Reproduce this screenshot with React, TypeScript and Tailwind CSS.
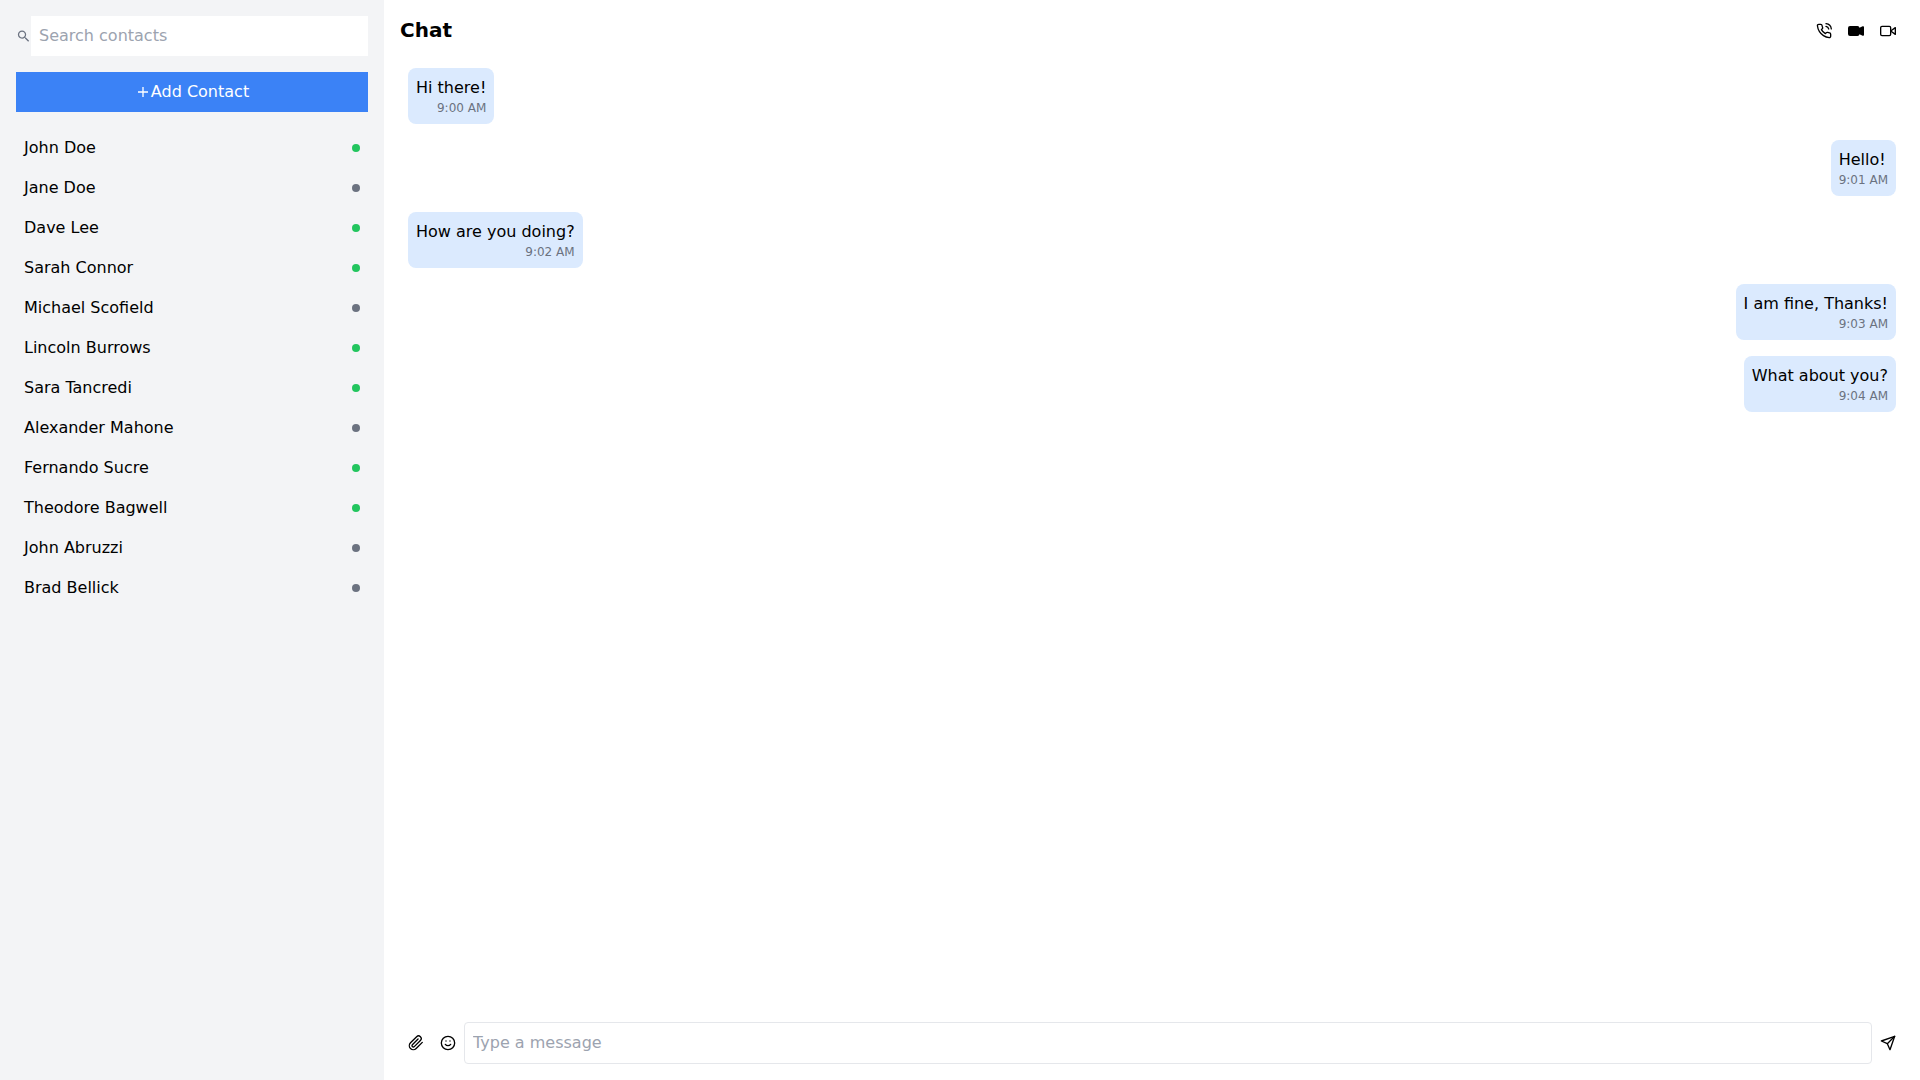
import React from 'react';
import { BsCameraVideoFill } from 'react-icons/bs';
import { FiPaperclip, FiPhoneCall, FiSend, FiSmile, FiVideo } from 'react-icons/fi';
import { IoMdAdd, IoMdSearch } from 'react-icons/io';

interface Contact {
  name: string;
  online: boolean;
}

interface Message {
  text: string;
  time: string;
  mine: boolean;
}

const contacts: Contact[] = [
  { name: 'John Doe', online: true },
  { name: 'Jane Doe', online: false },
  { name: 'Dave Lee', online: true },
  { name: 'Sarah Connor', online: true },
  { name: 'Michael Scofield', online: false },
  { name: 'Lincoln Burrows', online: true },
  { name: 'Sara Tancredi', online: true },
  { name: 'Alexander Mahone', online: false },
  { name: 'Fernando Sucre', online: true },
  { name: 'Theodore Bagwell', online: true },
  { name: 'John Abruzzi', online: false },
  { name: 'Brad Bellick', online: false },
];

const messages: Message[] = [
  { text: 'Hi there!', time: '9:00 AM', mine: false },
  { text: 'Hello!', time: '9:01 AM', mine: true },
  { text: 'How are you doing?', time: '9:02 AM', mine: false },
  { text: 'I am fine, Thanks!', time: '9:03 AM', mine: true },
  { text: 'What about you?', time: '9:04 AM', mine: true },
];

const Sidebar: React.FC = () => (
  <aside className="w-1/5 shrink-0 bg-[#f3f4f6] p-4">
    <div className="flex items-center mb-4">
      <label htmlFor="search" aria-label="Search contacts" className="shrink-0 text-[#6b7280]">
        <IoMdSearch className="w-[15px] h-4" />
      </label>
      <input
        id="search"
        type="text"
        placeholder="Search contacts"
        className="w-full min-w-0 bg-white p-2 outline-none placeholder:text-[#9ca3af]"
      />
    </div>
    <button className="w-full flex items-center justify-center bg-[#3b82f6] text-white p-2 mb-4">
      <IoMdAdd size={16} />
      Add Contact
    </button>
    <ul>
      {contacts.map((contact) => (
        <li key={contact.name} className="flex items-center justify-between p-2">
          <span>{contact.name}</span>
          <span className={`size-2 rounded-full ${contact.online ? 'bg-[#22c55e]' : 'bg-[#6b7280]'}`} />
        </li>
      ))}
    </ul>
  </aside>
);

export default function App() {
  return (
    <div className="flex min-h-screen bg-white text-black font-['DejaVu_Sans',sans-serif]">
      <Sidebar />

      <main className="flex flex-1 flex-col min-w-0">
        {/* Header */}
        <header className="flex items-center justify-between p-4">
          <h1 className="text-xl font-bold">Chat</h1>
          <div>
            <button aria-label="Voice call" className="mx-2 align-middle"><FiPhoneCall size={16} /></button>
            <button aria-label="Start video" className="mx-2 align-middle"><BsCameraVideoFill size={16} /></button>
            <button aria-label="Video call" className="mx-2 align-middle"><FiVideo size={16} /></button>
          </div>
        </header>

        {/* Messages */}
        <div className="flex flex-1 flex-col px-4">
          {messages.map((message) => (
            <div
              key={message.time}
              className={`m-2 p-2 rounded-lg bg-[#dbeafe] ${message.mine ? 'self-end' : 'self-start'}`}
            >
              <p>{message.text}</p>
              <p className="text-xs text-right text-[#6b7280]">{message.time}</p>
            </div>
          ))}
        </div>

        {/* Composer */}
        <form className="flex items-center p-4" onSubmit={(e) => e.preventDefault()}>
          <button type="button" aria-label="Attach file" className="mx-2"><FiPaperclip size={16} /></button>
          <button type="button" aria-label="Emoji" className="mx-2"><FiSmile size={16} /></button>
          <input
            type="text"
            aria-label="Message"
            placeholder="Type a message"
            className="flex-1 min-w-0 p-2 border border-[#e5e7eb] rounded outline-none placeholder:text-[#9ca3af]"
          />
          <button type="submit" aria-label="Send" className="mx-2"><FiSend size={16} /></button>
        </form>
      </main>
    </div>
  );
}
